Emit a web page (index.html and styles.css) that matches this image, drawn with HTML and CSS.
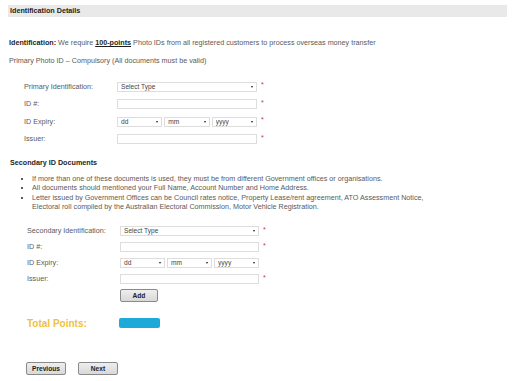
FILE: index.html
```html
<!DOCTYPE html>
<html lang="en">
  <head>
    <meta charset="UTF-8" />
    <meta name="viewport" content="width=device-width" />
    <title>Identification Details</title>
    <link rel="stylesheet" href="styles.css">
  </head>
  <body>
    <div class="page">
      <h2 class="section-title">Identification Details</h2>

      <p class="intro">
        <b>Identification:</b> We require <b class="points">100-points</b> Photo IDs from all registered customers to process overseas money transfer
      </p>
      <p class="note">Primary Photo ID &ndash; Compulsory (All documents must be valid)</p>

      <div class="id-form primary">
        <label>Primary Identification:</label>
        <span class="select"><select><option>Select Type</option></select></span>
        <span class="req">*</span>

        <label>ID #:</label>
        <input type="text" />
        <span class="req">*</span>

        <label>ID Expiry:</label>
        <div class="expiry">
          <span class="select"><select><option>dd</option></select></span>
          <span class="select"><select><option>mm</option></select></span>
          <span class="select"><select><option>yyyy</option></select></span>
        </div>
        <span class="req">*</span>

        <label>Issuer:</label>
        <input type="text" />
        <span class="req">*</span>
      </div>

      <h3 class="sub-title">Secondary ID Documents</h3>
      <ul class="doc-notes">
        <li>If more than one of these documents is used, they must be from different Government offices or organisations.</li>
        <li>All documents should mentioned your Full Name, Account Number and Home Address.</li>
        <li>Letter issued by Government Offices can be Council rates notice, Property Lease/rent agreement, ATO Assessment Notice,<br>Electoral roll compiled by the Australian Electoral Commission, Motor Vehicle Registration.</li>
      </ul>

      <div class="id-form secondary">
        <label>Secondary Identification:</label>
        <span class="select"><select><option>Select Type</option></select></span>
        <span class="req">*</span>

        <label>ID #:</label>
        <input type="text" />
        <span class="req">*</span>

        <label>ID Expiry:</label>
        <div class="expiry">
          <span class="select"><select><option>dd</option></select></span>
          <span class="select"><select><option>mm</option></select></span>
          <span class="select"><select><option>yyyy</option></select></span>
        </div>
        <span></span>

        <label>Issuer:</label>
        <input type="text" />
        <span class="req">*</span>

        <span></span>
        <div><button class="btn add">Add</button></div>
        <span></span>
      </div>

      <div class="total">
        <span class="total-label">Total Points:</span>
        <span class="total-value"></span>
      </div>

      <div class="nav">
        <button class="btn">Previous</button>
        <button class="btn">Next</button>
      </div>
    </div>
  </body>
</html>
```

FILE: styles.css
```css
:root {
  --text-color: #5a5a5a;
  --strong-color: #1e1e1e;
  --field-border: #dddddd;
  --req-color: #b23a48;
  --font: "Liberation Sans", Arial, sans-serif;
}

html,
body {
  margin: 0;
  background: #ffffff;
}

body {
  font-family: var(--font);
  font-size: 7.2px;
  color: var(--text-color);
}

.page {
  padding: 5px 5px 0 8px;
}

h2,
h3,
p,
ul {
  margin: 0;
}

b {
  color: var(--strong-color);
}

.section-title {
  height: 12px;
  line-height: 12px;
  padding-left: 2px;
  font-size: 7.2px;
  color: var(--strong-color);
  background: #e9e9e9;
}

.intro {
  margin-top: 21px;
  padding-left: 1px;
  line-height: 10px;
}

.points {
  text-decoration: underline;
}

.note {
  margin-top: 8px;
  padding-left: 1px;
  line-height: 10px;
}

.id-form {
  display: grid;
  grid-template-columns: 93px 140px 12px;
  grid-auto-rows: 17.5px;
  align-items: center;
  margin-top: 12px;
  margin-left: 16px;
}

.id-form label {
  line-height: 10px;
}

.id-form input {
  box-sizing: border-box;
  width: 100%;
  height: 10px;
  margin: 0;
  border: 1px solid var(--field-border);
  padding: 0 3px;
  font: 6px var(--font);
}

.select {
  position: relative;
  display: block;
}

.select select {
  box-sizing: border-box;
  display: block;
  width: 100%;
  height: 10px;
  margin: 0;
  padding: 0 3px;
  border: 1px solid var(--field-border);
  border-radius: 0;
  background: #ffffff;
  font: 6.6px var(--font);
  line-height: 8px;
  color: #444444;
  appearance: none;
  -webkit-appearance: none;
}

.select::after {
  content: "";
  position: absolute;
  right: 4px;
  top: 4px;
  border-left: 1.5px solid transparent;
  border-right: 1.5px solid transparent;
  border-top: 2px solid #222222;
}

.expiry {
  display: grid;
  grid-template-columns: 1fr 1fr 1fr;
  gap: 2px;
}

.req {
  align-self: start;
  margin-top: 3px;
  padding-left: 4px;
  font-size: 7px;
  line-height: 7px;
  color: var(--req-color);
}

.sub-title {
  margin-top: 10px;
  padding-left: 2px;
  font-size: 7.2px;
  line-height: 10px;
  color: var(--strong-color);
}

.doc-notes {
  margin-top: 6px;
  padding-left: 24px;
  line-height: 9.3px;
  list-style: square;
}

.secondary {
  grid-template-columns: 93px 139px 12px;
  grid-auto-rows: 16px;
  margin-top: 12px;
  margin-left: 19px;
}

.btn {
  height: 13px;
  padding: 0;
  border: 1px solid #8a8a8a;
  border-radius: 2px;
  background: linear-gradient(#eeeeee, #d8d8d8);
  font: bold 6.6px var(--font);
  color: #222222;
}

.add {
  display: block;
  width: 38px;
}

.total {
  display: flex;
  align-items: center;
  height: 12px;
  margin-top: 14px;
  margin-left: 19px;
}

.total-label {
  width: 92px;
  font-size: 10px;
  font-weight: bold;
  color: #efc23a;
}

.total-value {
  width: 41px;
  height: 10px;
  border-radius: 2px;
  background: #1eaad9;
}

.nav {
  display: flex;
  gap: 12px;
  margin-top: 33px;
  margin-left: 18px;
}

.nav .btn {
  width: 40px;
}
```
